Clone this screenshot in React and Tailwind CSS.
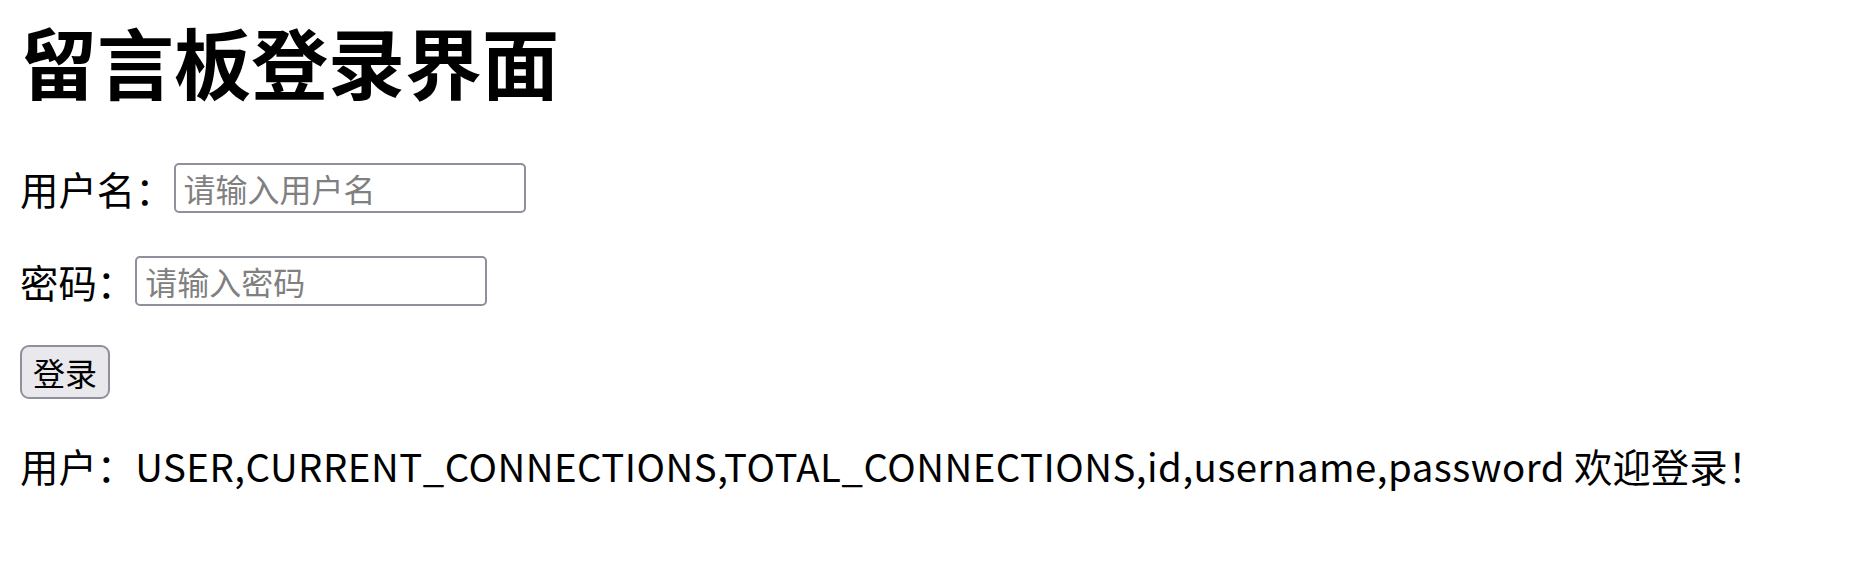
export default function App() {
  return (
    <div className="min-h-[569px] bg-white pl-[20px] text-black font-['Noto_Sans_CJK_SC',sans-serif]">
      <h1 className="pt-[11px] text-[77px] font-bold leading-[100px]">留言板登录界面</h1>

      <div className="mt-[52px] flex h-[50px] items-center text-[38.4px]">
        <span className="leading-[50px]">用户名：</span>
        <input
          type="text"
          placeholder="请输入用户名"
          className="box-border h-[50px] w-[352px] rounded-[5px] border-2 border-[#8f8f9d] px-[8px] text-[32px] outline-none placeholder:text-[#808080]"
        />
      </div>

      <div className="mt-[43px] flex h-[50px] items-center text-[38.4px]">
        <span className="leading-[50px]">密码：</span>
        <input
          type="password"
          placeholder="请输入密码"
          className="box-border h-[50px] w-[352px] rounded-[5px] border-2 border-[#8f8f9d] px-[8px] text-[32px] outline-none placeholder:text-[#808080]"
        />
      </div>

      <div className="mt-[39px]">
        <button className="box-border flex h-[54px] w-[90px] items-center justify-center rounded-[9px] border-2 border-[#8f8f9d] bg-[#e9e9ed] text-[32px] leading-none">
          登录
        </button>
      </div>

      <p className="mt-[41px] text-[38.4px] leading-[50px] whitespace-nowrap">
        用户：<span className="tracking-[0.5px]">USER,CURRENT_CONNECTIONS,TOTAL_CONNECTIONS,id,username,password </span>欢迎登录！
      </p>
    </div>
  );
}
